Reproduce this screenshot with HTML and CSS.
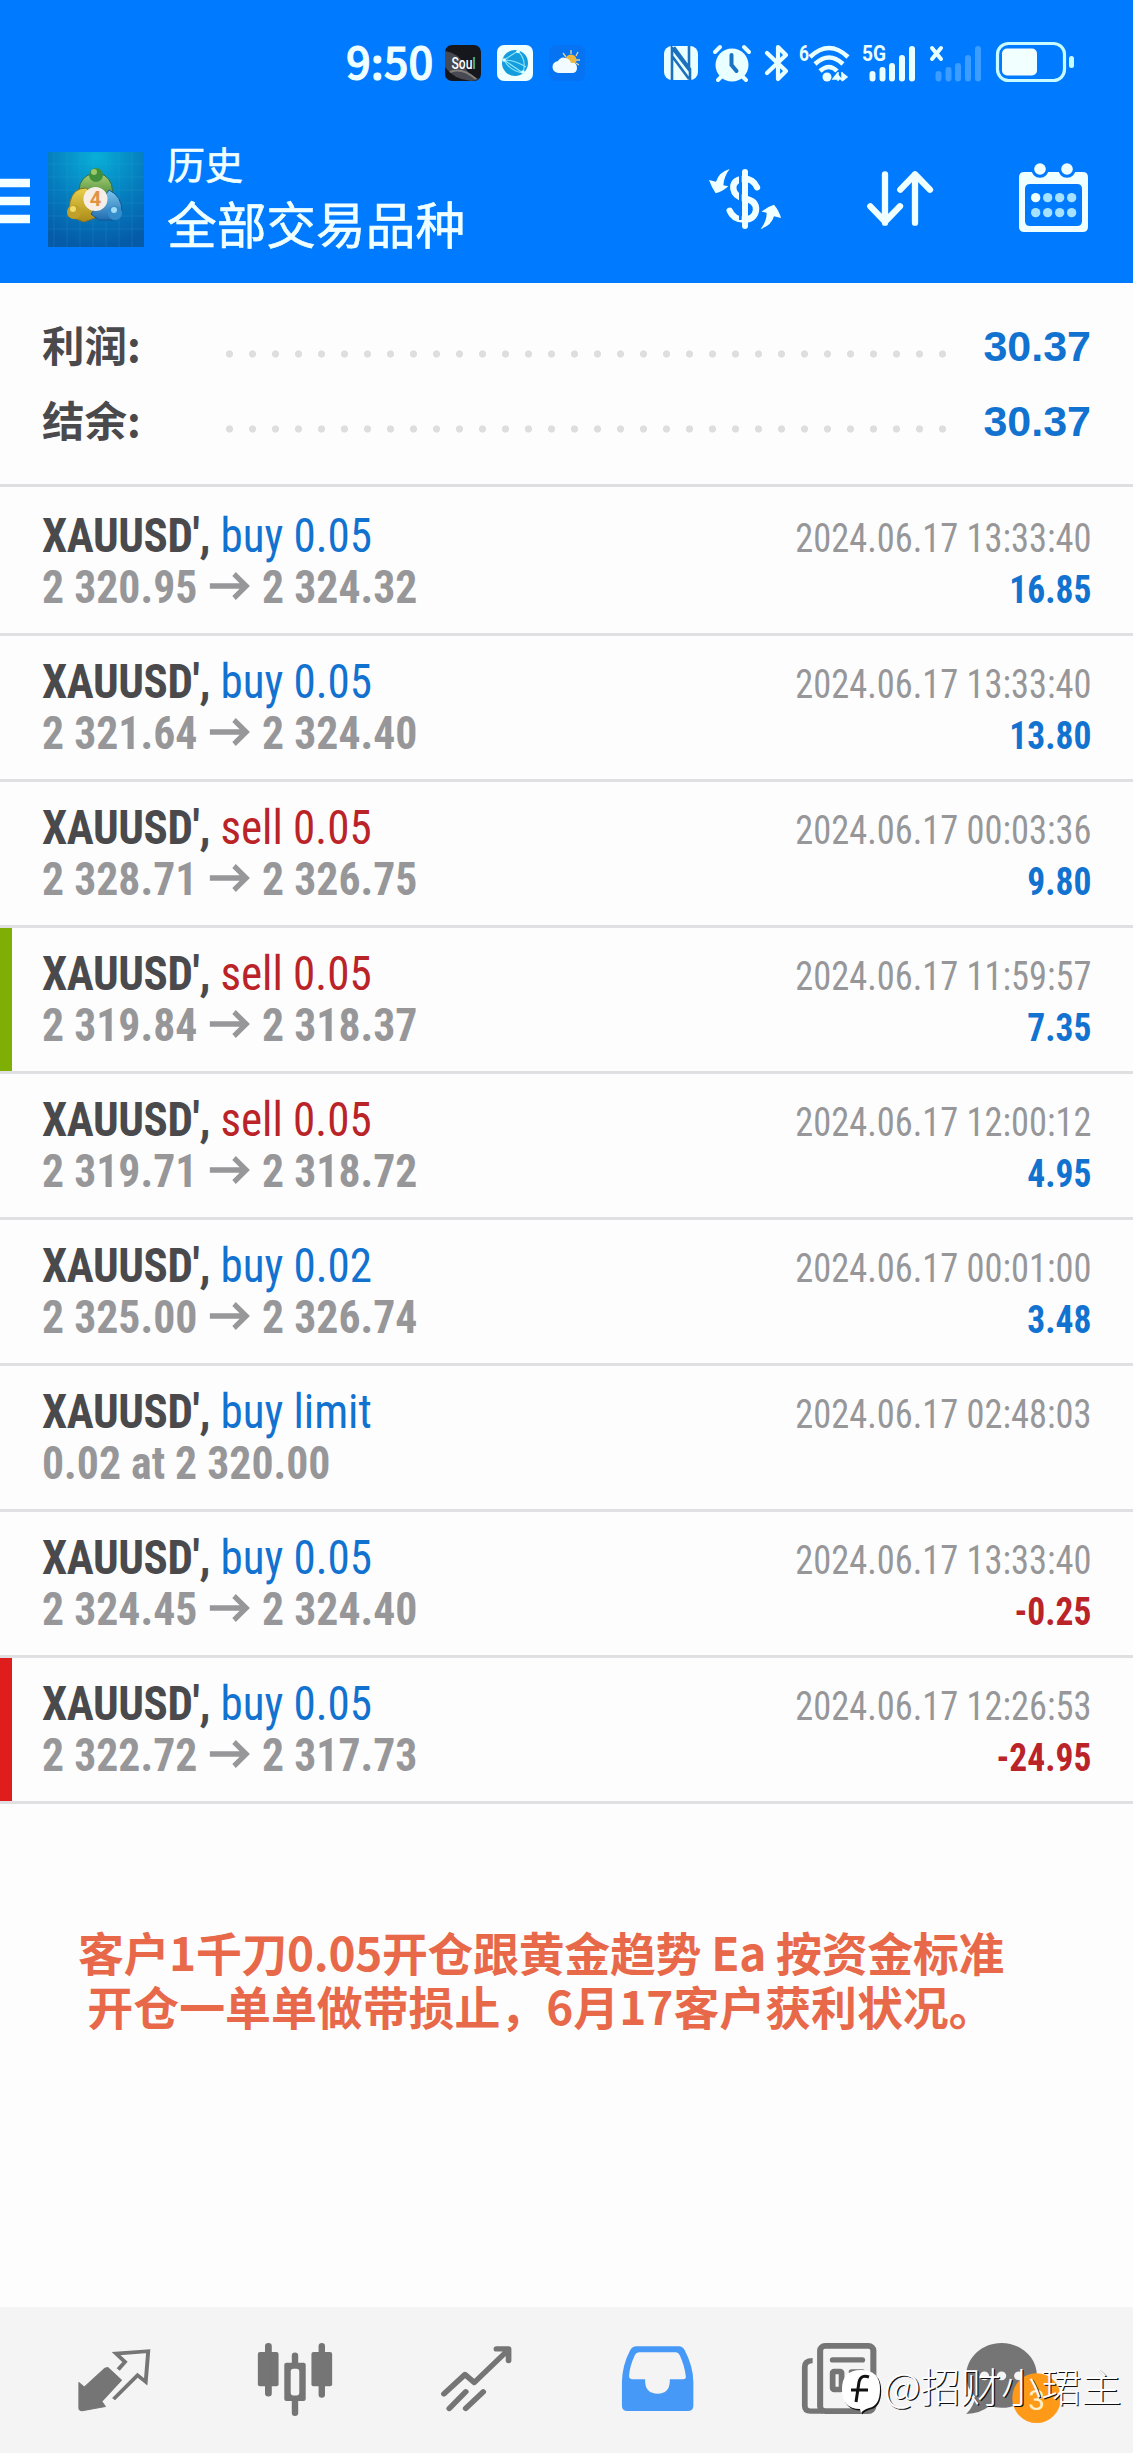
FILE: index.html
```html
<!DOCTYPE html>
<html lang="zh-CN">
<head>
<meta charset="utf-8">
<title>历史</title>
<link rel="stylesheet" href="styles.css">
</head>
<body>
<header class="top">
  <div class="status">
    <span class="clock">9:50</span>
    <svg class="app-icon" viewBox="0 0 36 36"><rect width="36" height="36" rx="7" fill="#15171d"/><path d="M0 6Q14 8 19 20T34 34Q30 36 26 36Q8 34 0 22Z" fill="#474a52"/><path d="M5 27Q17 22 31 34" stroke="#858078" stroke-width="2" fill="none"/><text x="6.5" y="24" class="soul" textLength="24" lengthAdjust="spacingAndGlyphs">Sou<tspan fill="#4fc9bd">l</tspan></text></svg>
    <svg class="app-icon" viewBox="0 0 36 36"><rect width="36" height="36" rx="7" fill="#f0ffff"/><circle cx="18" cy="18" r="13" fill="#149ddc"/><g fill="none" stroke="#8fe6fa" stroke-width="1.1"><path d="M7 15L21 6Q30 15 26 28L7 15Q13 26 26 28M7 15Q18 15 29 22"/></g><g fill="#d6ffff"><circle cx="7" cy="15" r="1.8"/><circle cx="21" cy="6.500" r="1.800"/><circle cx="26" cy="27" r="1.800"/></g></svg>
    <svg class="app-icon" viewBox="0 0 36 36"><rect width="36" height="36" rx="7" fill="#0673f2"/><g stroke="#e4d69b" stroke-width="1.300"><path d="M22 5v4M14 8l3 4M29 7l-2 4M31 15h-4M30 20l-3-2"/></g><circle cx="22" cy="15" r="5.500" fill="#efb83f"/><path d="M10 28a6 6 0 0 1-1-12q3-5 8-3q4 1 5 5q6-1 6 5q0 5-5 5z" fill="#f2fbff"/></svg>
    <svg class="nfc" viewBox="0 0 34 34"><rect width="34" height="34" rx="8" fill="#eaffff"/><path d="M8 34V2L25 24V0M10 1L26 23V34M8 10L25 33" fill="none" stroke="#1c70bd" stroke-width="2.600"/></svg>
    <svg class="alarm" viewBox="0 0 38 38"><circle cx="19" cy="21" r="16.500" fill="#eaffff"/><g fill="none" stroke="#eaffff" stroke-width="4" stroke-linecap="round"><path d="M2 8l5-5M36 8l-5-5M8 33l-3 3M30 33l3 3"/></g><path d="M18.500 11v10l5 6" fill="none" stroke="#1b72c2" stroke-width="4" stroke-linecap="round"/></svg>
    <svg class="bt" viewBox="0 0 24 38"><path d="M2 9L21 27L13 35V3L21 11L2 29" fill="none" stroke="#eaffff" stroke-width="4.200" stroke-linejoin="round" stroke-linecap="round"/></svg>
    <svg class="wifi" viewBox="0 0 52 40"><text x="0" y="18" class="mini" textLength="10" lengthAdjust="spacingAndGlyphs">6</text><g fill="none" stroke="#eaffff" stroke-width="4.500"><path d="M11 14Q30 -4 49 14M16 21Q30 8 44 21M21 28Q30 20 38 28"/></g><circle cx="28" cy="34" r="4.500" fill="#eaffff"/><path d="M39 29v9M34 36h8l-4-5zM43 29v9M43 30l5 4-5 4" stroke="#eaffff" stroke-width="1.500" fill="#eaffff"/></svg>
    <svg class="signal" viewBox="0 0 54 40"><text x="0" y="19" class="mini" textLength="24" lengthAdjust="spacingAndGlyphs">5G</text><g stroke="#eaffff" stroke-width="6" stroke-linecap="round"><path d="M10.500 32v4.500M20.500 28v8.500M30 24v12.500M40 16v20.500M50 7v29.500"/></g></svg>
    <svg class="signal" viewBox="0 0 54 40"><path d="M4 6l9 11M13 6L4 17" stroke="#eaffff" stroke-width="4" stroke-linecap="round"/><g stroke="#3b9dff" stroke-width="6" stroke-linecap="round"><path d="M10.500 32v4.500M20.500 28v8.500M30 24v12.500M40 16v20.500M50 7v29.500"/></g></svg>
    <svg class="battery" viewBox="0 0 78 40"><rect x="1.500" y="1.500" width="67" height="37" rx="11" fill="none" stroke="#c8fbff" stroke-width="3.200"/><rect x="6" y="6.500" width="35" height="27" rx="5" fill="#f2ffff"/><rect x="73" y="14" width="5" height="12" rx="2.500" fill="#c8fbff"/></svg>
  </div>
  <div class="bar">
    <svg class="menu" viewBox="0 0 30 46"><path d="M0 5h30M0 23h30M0 41h30" stroke="#f4ffff" stroke-width="8.500"/></svg>
    <svg class="logo" viewBox="0 0 96 95">
      <defs>
        <radialGradient id="sea" cx=".5" cy=".05" r=".95"><stop offset="0" stop-color="#08afd9"/><stop offset=".55" stop-color="#057cbd"/><stop offset="1" stop-color="#055ba8"/></radialGradient>
        <linearGradient id="gr" x2="0" y2="1"><stop stop-color="#a5cb70"/><stop offset="1" stop-color="#2b782a"/></linearGradient>
        <linearGradient id="ye" x2="0" y2="1"><stop stop-color="#ead14c"/><stop offset="1" stop-color="#aa8a18"/></linearGradient>
        <linearGradient id="bl" x2="0" y2="1"><stop stop-color="#7bc7ed"/><stop offset="1" stop-color="#216cb0"/></linearGradient>
      </defs>
      <rect width="96" height="95" fill="url(#sea)"/>
      <path d="M6 0v95M19 0v95M32 0v95M45 0v95M58 0v95M71 0v95M84 0v95M0 12h96M0 25h96M0 38h96M0 51h96M0 64h96M0 77h96" stroke="#35b3dc" stroke-width=".6" opacity=".3"/>
      <path d="M31 46Q29 29 40 23H56Q67 30 64 47L48 52Z" fill="url(#gr)" stroke="#2b6f45"/>
      <path d="M38 36Q25 36 22 50L20 64L36 70L47 66L45 42Z" fill="url(#ye)" stroke="#83712c"/>
      <path d="M61 38Q74 44 74 60L66 68H51L43 62Z" fill="url(#bl)" stroke="#145496"/>
      <circle cx="48" cy="23" r="7" fill="#42903b"/><circle cx="46" cy="20" r="3" fill="#9cc76b"/>
      <circle cx="26" cy="60" r="7" fill="#c0a028"/><circle cx="25" cy="57" r="3" fill="#efdc69"/>
      <circle cx="67" cy="61" r="7" fill="#358cca"/><circle cx="66" cy="58" r="3" fill="#a1dcf4"/>
      <circle cx="47.500" cy="47" r="12" fill="#f6eee7"/><text x="47.500" y="54" class="four">4</text>
    </svg>
    <div class="titles"><div class="small-title">历史</div><div class="big-title">全部交易品种</div></div>
    <svg class="dollar" viewBox="0 0 216 180"><g fill="none" stroke="#f0ffff"><path d="M144 55Q132 28 104 29Q70 33 73 60Q77 82 104 88Q144 94 141 124Q136 152 104 152Q72 151 62 125" stroke-width="19" stroke-linecap="round"/><path d="M94 18v135" stroke="#007aff" stroke-width="8"/><path d="M108 9v162" stroke-width="18" stroke-linecap="round"/></g><path d="M62 0Q30 9 21 38L0 33Q7 53 20 73Q40 68 58 52L43 49Q45 22 62 0ZM155 180Q187 170 195 142L216 147Q211 126 195 107Q174 113 158 128L173 131Q173 157 155 180Z" fill="#f0ffff"/></svg>
    <svg class="sort" viewBox="0 0 198 165"><path d="M54 10v145M10 106l44 46 45-46M144 155V10M100 56l44-46 45 46" fill="none" stroke="#f0ffff" stroke-width="19" stroke-linecap="round" stroke-linejoin="round"/></svg>
    <svg class="calendar" viewBox="0 0 207 207"><path fill-rule="evenodd" d="M16 27H191Q207 27 207 43V191Q207 207 191 207H16Q0 207 0 191V43Q0 27 16 27ZM33 63Q18 63 18 78V174Q18 189 33 189H174Q189 189 189 174V78Q189 63 174 63Z" fill="#f0ffff"/><g fill="#f0ffff" stroke="#007aff" stroke-width="9"><circle cx="63" cy="18" r="22"/><circle cx="144" cy="18" r="22"/></g><g fill="#a6e1ff"><circle cx="50" cy="104" r="14" fill="#f0ffff"/><circle cx="86" cy="104" r="14"/><circle cx="122" cy="104" r="14"/><circle cx="158" cy="104" r="14"/><circle cx="50" cy="149" r="14"/><circle cx="86" cy="149" r="14"/><circle cx="122" cy="149" r="14"/><circle cx="158" cy="149" r="14"/></g></svg>
  </div>
</header>
<section class="summary">
  <div class="sum"><span class="label">利润:</span><span class="dots"></span><span class="total">30.37</span></div>
  <div class="sum"><span class="label">结余:</span><span class="dots"></span><span class="total">30.37</span></div>
</section>
<main class="deals">
  <div class="deal"><div class="left"><div class="sym"><b>XAUUSD',</b> <span class="buy">buy 0.05</span></div><div class="price">2 320.95 <svg class="arrow" viewBox="0 0 42 28"><path d="M0 14h39M26 2l13 12-13 12"/></svg> 2 324.32</div></div><div class="right"><div class="time">2024.06.17 13:33:40</div><div class="val up">16.85</div></div></div>
  <div class="deal"><div class="left"><div class="sym"><b>XAUUSD',</b> <span class="buy">buy 0.05</span></div><div class="price">2 321.64 <svg class="arrow" viewBox="0 0 42 28"><path d="M0 14h39M26 2l13 12-13 12"/></svg> 2 324.40</div></div><div class="right"><div class="time">2024.06.17 13:33:40</div><div class="val up">13.80</div></div></div>
  <div class="deal"><div class="left"><div class="sym"><b>XAUUSD',</b> <span class="sell">sell 0.05</span></div><div class="price">2 328.71 <svg class="arrow" viewBox="0 0 42 28"><path d="M0 14h39M26 2l13 12-13 12"/></svg> 2 326.75</div></div><div class="right"><div class="time">2024.06.17 00:03:36</div><div class="val up">9.80</div></div></div>
  <div class="deal profit"><div class="left"><div class="sym"><b>XAUUSD',</b> <span class="sell">sell 0.05</span></div><div class="price">2 319.84 <svg class="arrow" viewBox="0 0 42 28"><path d="M0 14h39M26 2l13 12-13 12"/></svg> 2 318.37</div></div><div class="right"><div class="time">2024.06.17 11:59:57</div><div class="val up">7.35</div></div></div>
  <div class="deal"><div class="left"><div class="sym"><b>XAUUSD',</b> <span class="sell">sell 0.05</span></div><div class="price">2 319.71 <svg class="arrow" viewBox="0 0 42 28"><path d="M0 14h39M26 2l13 12-13 12"/></svg> 2 318.72</div></div><div class="right"><div class="time">2024.06.17 12:00:12</div><div class="val up">4.95</div></div></div>
  <div class="deal"><div class="left"><div class="sym"><b>XAUUSD',</b> <span class="buy">buy 0.02</span></div><div class="price">2 325.00 <svg class="arrow" viewBox="0 0 42 28"><path d="M0 14h39M26 2l13 12-13 12"/></svg> 2 326.74</div></div><div class="right"><div class="time">2024.06.17 00:01:00</div><div class="val up">3.48</div></div></div>
  <div class="deal"><div class="left"><div class="sym"><b>XAUUSD',</b> <span class="buy">buy limit</span></div><div class="price">0.02 at 2 320.00</div></div><div class="right"><div class="time">2024.06.17 02:48:03</div></div></div>
  <div class="deal"><div class="left"><div class="sym"><b>XAUUSD',</b> <span class="buy">buy 0.05</span></div><div class="price">2 324.45 <svg class="arrow" viewBox="0 0 42 28"><path d="M0 14h39M26 2l13 12-13 12"/></svg> 2 324.40</div></div><div class="right"><div class="time">2024.06.17 13:33:40</div><div class="val down">-0.25</div></div></div>
  <div class="deal loss"><div class="left"><div class="sym"><b>XAUUSD',</b> <span class="buy">buy 0.05</span></div><div class="price">2 322.72 <svg class="arrow" viewBox="0 0 42 28"><path d="M0 14h39M26 2l13 12-13 12"/></svg> 2 317.73</div></div><div class="right"><div class="time">2024.06.17 12:26:53</div><div class="val down">-24.95</div></div></div>
</main>
<p class="note"><span class="line1">客户1千刀0.05开仓跟黄金趋势 Ea 按资金标准</span><span>开仓一单单做带损止，6月17客户获利状况。</span></p>
<nav class="tabs">
  <svg class="tab" preserveAspectRatio="none" viewBox="67.2 50 506.8 439"><path d="M302 232L340 270L285 334L295 349L230 362Q221 362 221 354V277L236 291L294 234Z" fill="#757575" stroke="#757575" stroke-width="3" stroke-linejoin="round"/><path d="M331 238L350 215L325 190L415 183L408 275L385 255L318 327" fill="none" stroke="#757575" stroke-width="11"/></svg>
  <svg class="tab" preserveAspectRatio="none" viewBox="574 50 506.8 439"><g fill="#757575"><rect x="722" y="185" width="58" height="103" rx="6"/><rect x="742" y="158" width="19" height="161" rx="9"/><rect x="872" y="185" width="58" height="103" rx="6"/><rect x="892" y="158" width="18" height="165" rx="9"/><rect x="817" y="187" width="18" height="40" rx="9"/><rect x="817" y="320" width="18" height="58" rx="9"/><path fill-rule="evenodd" d="M802 218H850Q856 218 856 224V327Q856 333 850 333H802Q796 333 796 327V224Q796 218 802 218ZM822 236Q814 236 814 244V308Q814 316 822 316H830Q838 316 838 308V244Q838 236 830 236Z"/></g></svg>
  <svg class="tab" preserveAspectRatio="none" viewBox="1080.8 50 506.8 439"><g fill="none" stroke="#757575" stroke-width="16" stroke-linecap="round" stroke-linejoin="round"><path d="M1243 311L1302 253L1328 277L1422 180M1390 176H1424V211M1258 355L1304 305M1304 355L1353 305"/></g></svg>
  <svg class="tab" preserveAspectRatio="none" viewBox="-16.8 50 506.8 439"><path fill-rule="evenodd" d="M178 168H296Q307 168 313 180Q337 230 337 275V347Q337 363 321 363H153Q137 363 137 347V275Q138 225 160 180Q166 168 178 168ZM185 186Q177 186 173 195Q158 230 157 257Q157 267 165 267H202V275Q203 310 237 311Q270 310 271 275V267H308Q317 267 316 259Q312 225 299 195Q295 186 288 186Z" fill="#4799f7"/></svg>
  <svg class="tab" preserveAspectRatio="none" viewBox="490 50 506.8 439"><g fill="none" stroke="#757575"><rect x="692" y="167" width="149" height="196" rx="14" stroke-width="17"/><path d="M671 211Q649 211 649 230V347Q649 363 665 363H700" stroke-width="16"/><path d="M727 209H810M780 245H810M780 270H810M780 296H810" stroke-width="16" stroke-linecap="round"/><rect x="727" y="244" width="25" height="54" rx="4" stroke-width="16"/></g></svg>
  <svg class="tab" preserveAspectRatio="none" viewBox="996.8 50 506.8 439"><path d="M1200 158C1255 158 1299 202 1299 256S1255 353 1200 353Q1182 353 1166 348Q1140 371 1101 372Q1122 350 1126 320Q1101 292 1101 256C1101 202 1145 158 1200 158Z" fill="#757575"/><g fill="#f4f4f4"><circle cx="1152" cy="257" r="13"/><circle cx="1200" cy="257" r="13"/><circle cx="1248" cy="257" r="13"/></g><ellipse cx="1298" cy="324" rx="68" ry="75" fill="#ff9a19"/><text x="1298" y="359" class="count">3</text></svg>
  <div class="mark">
    <svg class="mark-logo" viewBox="0 0 40 45"><path d="M19 0Q38 0 38 19Q38 36 27 38Q21 40 19 43L18 39Q0 39 0 19Q0 0 19 0Z" fill="#111" transform="translate(1.200 1.500)"/><path d="M19 0Q38 0 38 19Q38 36 27 38Q21 40 19 43L18 39Q0 39 0 19Q0 0 19 0Z" fill="#fff"/><path d="M27 7Q19 4 17 12L14 32M9 20H26" stroke="#111" stroke-width="3" fill="none"/></svg>
    <span>@招财小珺主</span>
  </div>
</nav>
</body>
</html>
```
FILE: styles.css
```css
* { box-sizing: border-box; }
body { margin: 0; width: 1133px; height: 2453px; background: #fdfdfe; display: flex; flex-direction: column; font-family: "Roboto", "Noto Sans CJK SC", sans-serif; overflow: hidden; }
svg { display: block; flex: none; overflow: visible; }
.top { height: 283px; background: #007aff; color: #f0ffff; flex: none; }
.status { height: 126px; display: flex; align-items: center; padding-left: 346px; }
.clock { width: 99px; margin-top: -4px; font: 500 43.5px/60px "Noto Sans CJK SC", sans-serif; -webkit-text-stroke: 1px #f0ffff; white-space: nowrap; }
.app-icon { width: 36px; height: 36px; margin-right: 16px; }
.soul { font: 500 16px "Roboto", sans-serif; fill: #fff; }
.mini { font: 700 22px "Roboto", sans-serif; fill: #eaffff; }
.nfc { width: 34px; height: 34px; margin-left: 63px; }
.alarm { width: 38px; height: 38px; margin-left: 15px; }
.bt { width: 24px; height: 38px; margin-left: 14px; }
.wifi { width: 52px; height: 40px; margin-left: 10px; }
.signal { width: 54px; height: 40px; margin: -2px 0 0 11px; }
.signal + .signal { margin-left: 12px; }
.battery { width: 78px; height: 40px; margin: -2px 0 0 14px; }
.bar { height: 157px; display: flex; align-items: flex-start; }
.menu { width: 30px; height: 46px; margin-top: 52px; }
.logo { width: 96px; height: 95px; margin: 26px 0 0 18px; }
.four { font: 700 20px "Roboto", sans-serif; fill: #e29240; text-anchor: middle; }
.titles { width: 542px; margin: 8px 0 0 23px; -webkit-text-stroke: .6px #f0ffff; }
.small-title { font: 400 38px/58px "Noto Sans CJK SC", sans-serif; }
.big-title { font: 400 49.7px/60px "Noto Sans CJK SC", sans-serif; }
.dollar { width: 72px; height: 60px; margin-top: 43px; }
.sort { width: 66px; height: 55px; margin: 45px 0 0 86px; }
.calendar { width: 69px; height: 69px; margin: 37px 0 0 86px; }
.summary { height: 204px; padding: 26px 42px 0 42px; border-bottom: 3px solid #dedee0; flex: none; }
.sum { height: 75px; display: flex; align-items: center; }
.label { width: 183px; margin-top: -7px; font: 700 42.5px/75px "Noto Sans CJK SC", sans-serif; color: #4a4a4d; }
.dots { width: 736px; height: 8px; margin-top: 14px; margin-left: -7px; background: radial-gradient(circle at 11.5px 4px, #dededf 3.2px, transparent 4px) 0 0 / 23px 8px repeat-x; }
.total { margin-left: auto; font: 700 43px/75px "Liberation Sans", sans-serif; color: #1272d0; }
.deals { padding-top: 3px; flex: none; }
.deal { height: 146px; display: flex; justify-content: space-between; padding: 20px 42px 0 42px; border-bottom: 3px solid #e0e0e2; font-family: "Roboto Condensed", "Roboto", sans-serif; font-stretch: 75%; white-space: nowrap; background: linear-gradient(var(--edge, transparent), var(--edge, transparent)) 0 0 / 12px 100% no-repeat; }
.profit { --edge: #7fae05; }
.loss { --edge: #e01d1d; }
.sym { font-size: 48px; line-height: 51px; color: #4a4a4d; transform: scaleX(.938); transform-origin: left; }
.sym b { letter-spacing: -.4px; }
.price { font-size: 47px; line-height: 51px; font-weight: 700; color: #979799; transform: scaleX(.93); transform-origin: left; }
.arrow { display: inline-block; width: 45px; height: 28px; vertical-align: 3px; margin: 0 2px 0 1px; }
.arrow path { fill: none; stroke: #979799; stroke-width: 5.5; }
.buy, .up { color: #1272d0; }
.sell, .down { color: #ba2429; }
.right { text-align: right; }
.time, .val { transform: scaleX(.91); transform-origin: right; }
.time { font-size: 40px; line-height: 51px; padding-top: 3px; color: #979799; }
.val { font-size: 39px; line-height: 53px; font-weight: 700; }
.note { margin: 120px 51px 0 0; display: flex; flex-direction: column; align-items: center; font: 700 45.9px/54px "Noto Sans CJK SC", sans-serif; color: #e8694a; white-space: nowrap; }
.line1 { letter-spacing: -.3px; }
.tabs { margin-top: auto; height: 146px; padding-left: 24px; display: flex; background: #f4f4f4; position: relative; flex: none; }
.tab { width: 181px; height: 146px; }
.count { font: 400 84px "Roboto", sans-serif; fill: #fff0c8; text-anchor: middle; }
.mark { position: absolute; left: 842px; top: 47px; display: flex; align-items: center; gap: 2px; font: 300 40.2px/56px "Noto Sans CJK SC", sans-serif; color: #fff; text-shadow: 1.2px 1.2px 0 #111; white-space: nowrap; }
.mark-logo { width: 40px; height: 45px; margin-top: 16px; }
```
